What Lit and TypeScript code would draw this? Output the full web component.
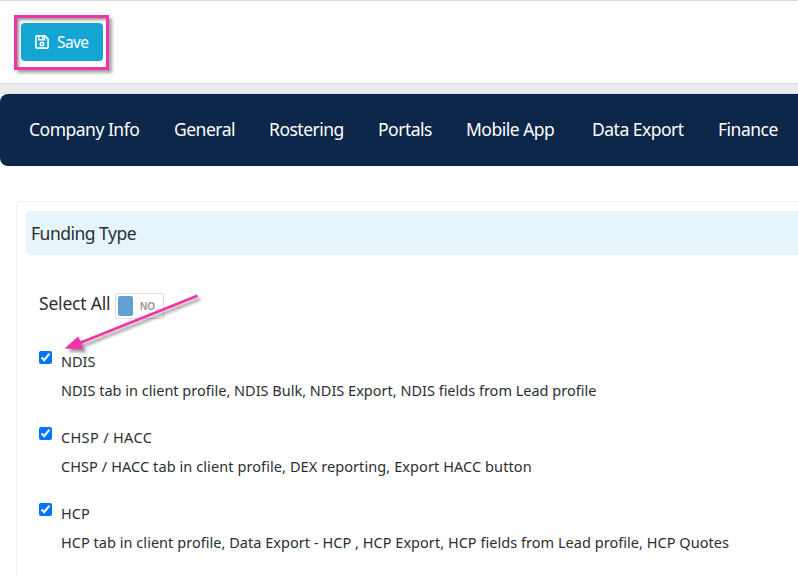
import { LitElement, html, css } from 'lit';
import { customElement, property } from 'lit/decorators.js';
import { styleMap } from 'lit/directives/style-map.js';

const TABS = ['Company Info', 'General', 'Rostering', 'Portals', 'Mobile App', 'Data Export', 'Finance'];

// tracking is the letter spacing in px for the name and the info line
const FUNDING_TYPES = [
  {
    name: 'NDIS',
    info: 'NDIS tab in client profile, NDIS Bulk, NDIS Export, NDIS fields from Lead profile',
    tracking: [0, 0],
  },
  {
    name: 'CHSP / HACC',
    info: 'CHSP / HACC tab in client profile, DEX reporting, Export HACC button',
    tracking: [0.35, 0.085],
  },
  {
    name: 'HCP',
    info: 'HCP tab in client profile, Data Export - HCP , HCP Export, HCP fields from Lead profile, HCP Quotes',
    tracking: [0.1, 0.035],
  },
];

@customElement('save-bar')
export class SaveBar extends LitElement {
  static styles = css`
    :host {
      display: block;
      box-sizing: border-box;
      height: 84px;
      padding: 14px;
      border-top: 1px solid #dedede;
      border-bottom: 1px solid #dcdcdc;
    }
    .highlight {
      box-sizing: border-box;
      width: 95px;
      height: 55px;
      padding: 5px 3px 7px 4px;
      border: 3px solid #f035a8;
      box-shadow: 3px 3px 3px rgba(0, 0, 0, 0.35), inset 2px 2px 3px rgba(0, 0, 0, 0.4);
    }
    .save {
      display: flex;
      align-items: center;
      box-sizing: border-box;
      width: 82px;
      height: 38px;
      padding: 0 0 0 14px;
      gap: 8px;
      border: none;
      border-radius: 4px;
      background: #14a5d3;
      color: #fff;
      font: 15.5px 'Noto Sans', sans-serif;
      letter-spacing: -0.6px;
    }
    .icon {
      display: block;
      flex: none;
    }
  `;

  render() {
    return html`
      <div class="highlight">
        <button class="save">
          <svg class="icon" width="14" height="14" viewBox="0 0 14 14" fill="none" stroke="#fff" stroke-width="1.6">
            <path d="M1.8 .9H10L13.1 4V12.2Q13.1 13.1 12.2 13.1H1.8Q.9 13.1 .9 12.2V1.8Q.9 .9 1.8 .9Z" />
            <path d="M3.7 1V4.8H9.6V1M7.800 1V4" stroke-width="1.4" />
            <circle cx="7" cy="9.100" r="1.7" />
          </svg>
          <span>Save</span>
        </button>
      </div>
    `;
  }
}

@customElement('tab-bar')
export class TabBar extends LitElement {
  static styles = css`
    :host {
      display: block;
      padding-top: 10px;
      background: linear-gradient(#ebeced 9px, #dfe0e2 9px, #dfe0e2 10px, #fff 10px);
    }
    .tabs {
      display: grid;
      grid-template-columns: 145px 95px 109px 88px 126px 126px 60px;
      align-items: center;
      box-sizing: border-box;
      height: 72px;
      padding: 0 0 2px 29px;
      border-radius: 8px 0 0 8px;
      background: #0c2749;
      color: #fff;
      font: 17.5px 'Noto Sans', sans-serif;
      letter-spacing: -0.5px;
      white-space: nowrap;
    }
  `;

  render() {
    return html`<nav class="tabs">${TABS.map((tab) => html`<span>${tab}</span>`)}</nav>`;
  }
}

@customElement('funding-row')
export class FundingRow extends LitElement {
  static styles = css`
    :host {
      display: flex;
      height: 76px;
      gap: 9px;
    }
    .check {
      flex: none;
      width: 13px;
      height: 13px;
      margin: 4px 0 0;
    }
    .text {
      color: #2b2f33;
      font: 14.5px/29px 'Noto Sans', sans-serif;
      white-space: nowrap;
    }
  `;

  @property() name = '';
  @property() info = '';
  @property({ attribute: false }) tracking = [0, 0];

  render() {
    const [name, info] = this.tracking;
    return html`
      <input class="check" type="checkbox" checked />
      <div class="text">
        <div style=${styleMap({ letterSpacing: `${name}px` })}>${this.name}</div>
        <div style=${styleMap({ letterSpacing: `${info}px` })}>${this.info}</div>
      </div>
    `;
  }
}

@customElement('app-root')
export class AppRoot extends LitElement {
  static styles = css`
    :host {
      display: block;
      position: relative;
      height: 576px;
      overflow: hidden;
      background: #fff;
      color: #2b2f33;
      font-family: 'Noto Sans', sans-serif;
    }
    .panel {
      box-sizing: border-box;
      height: 420px;
      margin: 35px 0 0 16px;
      padding: 9px 0 0 9px;
      border: 1px solid #eeeff5;
      border-right: none;
      border-radius: 4px 0 0 0;
    }
    .title {
      height: 44px;
      padding-left: 5px;
      border-radius: 5px 0 0 5px;
      background: #e5f5fb;
      font-size: 17.5px;
      letter-spacing: -0.5px;
      line-height: 45px;
    }
    .select-all {
      display: flex;
      height: 26px;
      margin: 38px 0 28px 13px;
      gap: 5px;
      font-size: 17.5px;
      line-height: 21px;
      white-space: nowrap;
    }
    .label {
      width: 71px;
      letter-spacing: -0.2px;
    }
    .switch {
      display: flex;
      align-items: center;
      box-sizing: border-box;
      width: 49px;
      height: 26px;
      padding-left: 2px;
      gap: 7px;
      border: 1px solid #ddd;
      border-radius: 2px;
      color: #999;
      font: bold 10px 'Liberation Sans', sans-serif;
    }
    .knob {
      width: 15px;
      height: 20px;
      border-radius: 2px;
      background: #629fd3;
    }
    .list {
      padding-left: 13px;
    }
    .arrow {
      position: absolute;
      left: 55px;
      top: 285px;
      filter: drop-shadow(3px 3px 1.5px rgba(0, 0, 0, 0.4));
    }
  `;

  render() {
    return html`
      <save-bar></save-bar>
      <tab-bar></tab-bar>
      <section class="panel">
        <div class="title">Funding Type</div>
        <div class="select-all">
          <span class="label">Select All</span>
          <span class="switch"><span class="knob"></span>NO</span>
        </div>
        <div class="list">
          ${FUNDING_TYPES.map(
            (type) => html`
              <funding-row .name=${type.name} .info=${type.info} .tracking=${type.tracking}></funding-row>
            `
          )}
        </div>
      </section>
      <svg class="arrow" width="155" height="75" viewBox="55 285 155 75" fill="#f035a8">
        <path d="M64.500 348.500L78 336.500L80.500 341.300L196.800 294.500L198 297L81.500 343.800L83 349.500Z" />
      </svg>
    `;
  }
}
